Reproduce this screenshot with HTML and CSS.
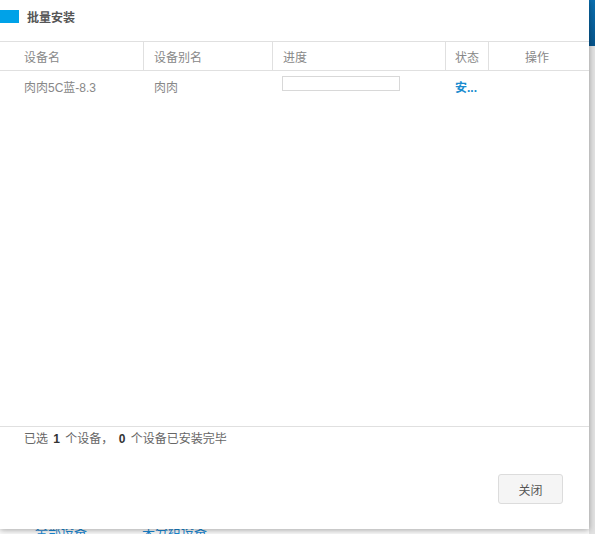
FILE: index.html
```html
<!DOCTYPE html>
<html lang="zh">
<head>
<meta charset="utf-8">
<link rel="stylesheet" href="styles.css">
</head>
<body>
<div class="page">
  <div class="bg-right">
    <div class="bg-bar"></div>
    <div class="bg-rest"></div>
  </div>
  <div class="bg-bottom">
    <span class="bg-link">全部设备</span>
    <span class="bg-link second">未分组设备</span>
  </div>
  <div class="dialog">
    <div class="dlg-head">
      <span class="mark"></span>
      <span class="title">批量安装</span>
    </div>
    <div class="table">
      <div class="row head">
        <div class="cell c1">设备名</div>
        <div class="cell c2">设备别名</div>
        <div class="cell c3">进度</div>
        <div class="cell c4">状态</div>
        <div class="cell c5">操作</div>
      </div>
      <div class="row data">
        <div class="cell c1">肉肉5C蓝-8.3</div>
        <div class="cell c2">肉肉</div>
        <div class="cell c3"><div class="progress"></div></div>
        <div class="cell c4 status">安...</div>
        <div class="cell c5"></div>
      </div>
    </div>
    <div class="summary">已选 <b>1</b> 个设备， <b>0</b> 个设备已安装完毕</div>
    <div class="actions">
      <button class="btn">关闭</button>
    </div>
  </div>
</div>
</body>
</html>
```
FILE: styles.css
```css
html, body {
  margin: 0;
  padding: 0;
}
body {
  width: 595px;
  height: 534px;
  overflow: hidden;
  font-family: "Liberation Sans", "Noto Sans CJK SC", sans-serif;
  font-size: 12px;
  background: #f4f4f4;
}
.page {
  position: relative;
  width: 595px;
  height: 534px;
}
.bg-right {
  position: absolute;
  right: 0;
  top: 0;
  width: 6px;
  height: 534px;
  display: flex;
  flex-direction: column;
}
.bg-bar {
  height: 46px;
  background: linear-gradient(#0a6fb0, #07558c);
}
.bg-rest {
  flex: 1;
  background: #e2e2e2;
}
.bg-bottom {
  position: absolute;
  left: 0;
  top: 522px;
  width: 589px;
  height: 12px;
  background: #fafafa;
  display: flex;
  font-size: 13px;
  color: #1a86d0;
}
.bg-link {
  margin-left: 35px;
  line-height: 20px;
}
.bg-link.second {
  margin-left: 55px;
}
.dialog {
  position: absolute;
  left: 0;
  top: 0;
  width: 589px;
  height: 529px;
  background: #fff;
  box-shadow: 0 1px 6px rgba(0,0,0,0.35);
  display: flex;
  flex-direction: column;
}
.dlg-head {
  height: 33px;
  display: flex;
  align-items: center;
}
.mark {
  width: 19px;
  height: 13px;
  background: #00a2e8;
  margin-right: 8px;
}
.title {
  font-weight: bold;
  color: #555;
  font-size: 12px;
}
.table {
  margin-top: 8px;
  height: 384px;
  border-top: 1px solid #e0e0e0;
  border-bottom: 1px solid #e0e0e0;
}
.row {
  display: flex;
}
.row.head {
  height: 28px;
  border-bottom: 1px solid #e0e0e0;
  color: #888;
}
.row.data {
  height: 30px;
  color: #888;
}
.cell {
  display: flex;
  align-items: center;
  box-sizing: border-box;
}
.c1 { width: 144px; padding-left: 24px; }
.c2 { width: 129px; padding-left: 10px; }
.c3 { width: 173px; padding-left: 10px; }
.c4 { width: 43px; padding-left: 9px; }
.c5 { flex: 1; justify-content: center; }
.row.head .c1, .row.head .c2, .row.head .c3, .row.head .c4 {
  border-right: 1px solid #e0e0e0;
}
.row.head .c5 { padding-right: 4px; }
.row.data .c3 { align-items: flex-start; padding-top: 5px; }
.progress {
  width: 116px;
  height: 13px;
  border: 1px solid #d8d8d8;
  margin-left: -1px;
}
.status {
  color: #1a8ccf;
  font-weight: bold;
}
.summary {
  padding-left: 24px;
  margin-top: 4px;
  line-height: 16px;
  color: #666;
}
.summary b {
  color: #333;
  margin: 0 2px;
}
.actions {
  display: flex;
  justify-content: flex-end;
  padding-right: 26px;
  margin-top: 27px;
}
.btn {
  width: 65px;
  height: 30px;
  background: #f5f5f5;
  border: 1px solid #dcdcdc;
  border-radius: 3px;
  font-family: "Liberation Sans", "Noto Sans CJK SC", sans-serif;
  font-size: 12px;
  color: #555;
  padding: 0;
}
```
